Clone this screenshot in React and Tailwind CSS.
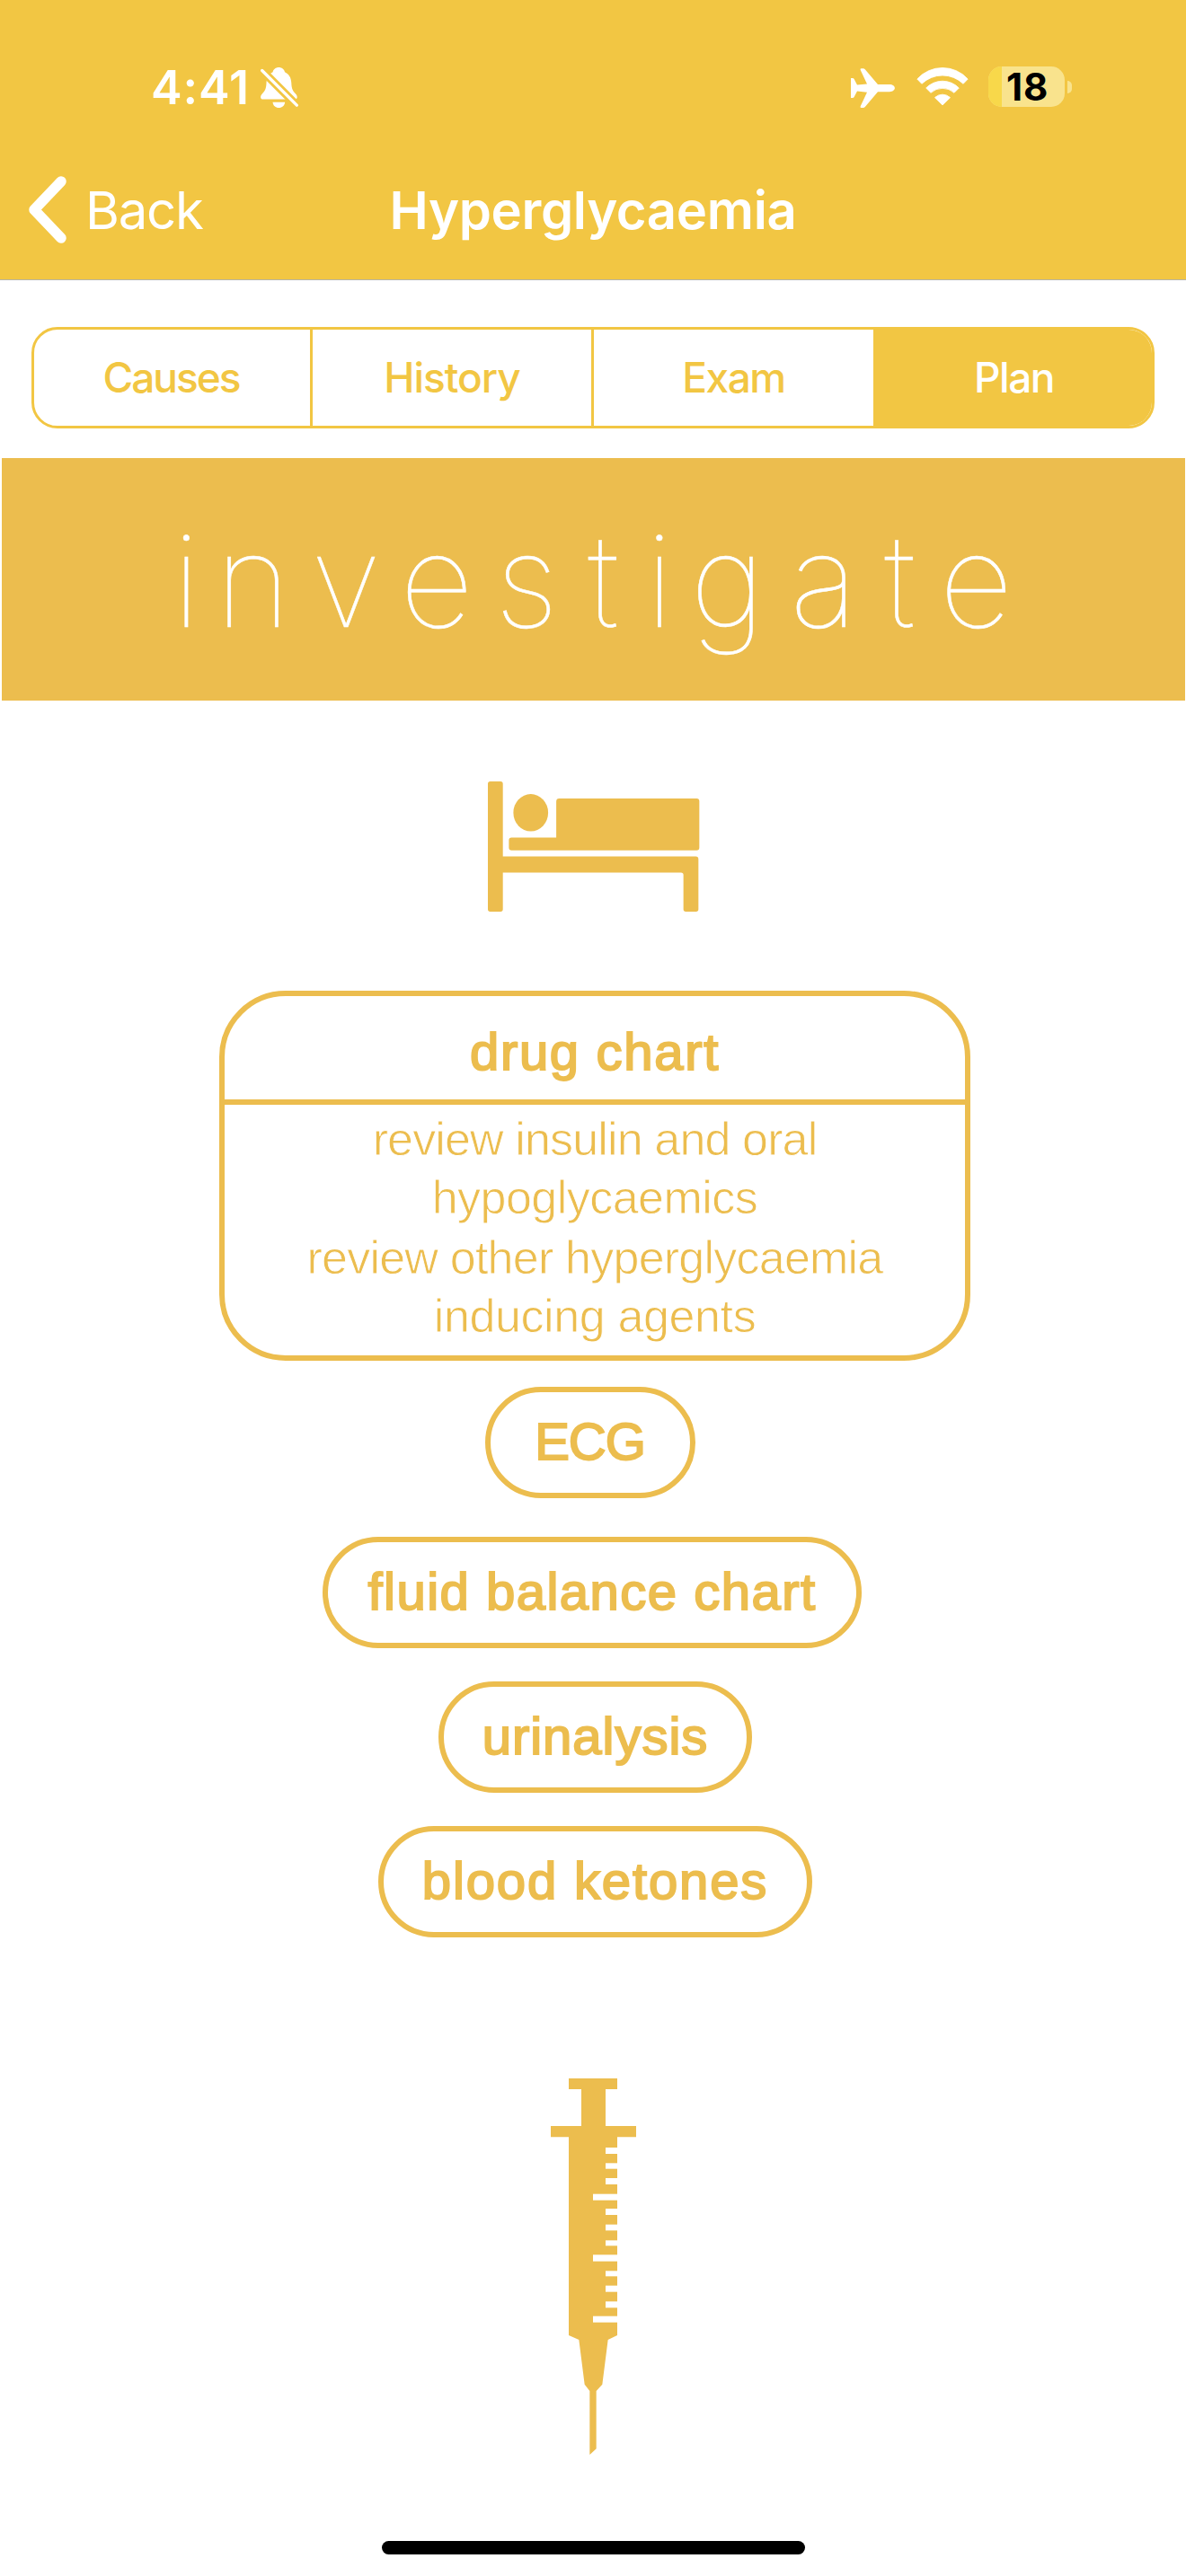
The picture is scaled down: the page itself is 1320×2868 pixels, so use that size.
function BellSlashIcon() {
  return (
    <svg width="42" height="46" viewBox="0 0 42 46" className="block">
      <path d="M20.3 0c-3.4 0-6 2.200-6.700 5.200C9 7.400 6.700 11.500 6.500 17.500C6.300 23.500 5 26 2 29.300C.6 30.900.1 32 .1 33.300C.1 34.700 1.200 35.600 2.800 35.600H38c1.600 0 2.700-.9 2.700-2.300c0-1.300-.5-2.400-1.900-4C35.800 26 34.500 23.500 34.300 17.500C34.100 11.500 31.600 7.400 27 5.200C26.300 2.200 23.700 0 20.300 0Z" fill="#fff" />
      <path d="M13.500 38.700H27.200C26.800 42.500 24 45 20.300 45S13.900 42.500 13.500 38.700Z" fill="#fff" />
      <path d="M1.700 3.500L40.600 42.500" stroke="#f2c643" strokeWidth="9" />
      <path d="M1.700 3.500L40.300 42.200" stroke="#fff" strokeWidth="3.300" strokeLinecap="round" />
    </svg>
  );
}

function PlaneIcon() {
  return (
    <svg width="49" height="44" viewBox="0 0 49 44" className="block">
      <path d="M30 18H43C46.500 18 48.900 20 48.900 22S46.500 26.200 43 26.200H30L16 42.700Q15 44 13.500 44H11.500Q10 44 10.700 42.300L18 26.800L7 25.600L3.600 32Q3.100 33 2 33H0V11H2Q3.100 11 3.600 12L7 18.600L18 17.500L10.700 2Q10 .3 11.500.3H13.500Q15 .3 16 1.600Z" fill="#fff" />
    </svg>
  );
}

function WifiIcon() {
  return (
    <svg width="58" height="43" viewBox="0 0 57.200 43" className="block">
      <g fill="#fff" stroke="#fff" strokeWidth=".8" strokeLinejoin="round">
        <path d="M.4 13A38 38 0 0 1 56.800 13L51.700 18.300A33.300 33.300 0 0 0 5.500 18.300Z" />
        <path d="M10.300 23A25.500 25.500 0 0 1 46.900 23L41.600 28.300A19.400 19.400 0 0 0 15.600 28.300Z" />
        <path d="M20.100 33.700A12 12 0 0 1 37.100 33.700L28.600 42Z" />
      </g>
    </svg>
  );
}

function Battery() {
  return (
    <div className="flex items-center gap-[3px]">
      <div className="flex h-[45px] w-[85px] items-center rounded-[15px] bg-[#f9e38d]">
        <div className="h-full w-[15px] rounded-l-[15px] bg-[#f8d84a]" />
        <span className="pl-[5px] text-[42px] leading-[52px] font-bold tracking-[0.9px] text-black">18</span>
      </div>
      <div className="h-[14px] w-[5px] rounded-r-full bg-[#f9e38d]" />
    </div>
  );
}

function BedIcon() {
  return (
    <svg width="236" height="145" viewBox="129 60 707 434" className="mt-[90px] ml-[2px] block shrink-0">
      <g fill="#ecbd4e">
        <path d="M137 60H171Q179 60 179 68V310H822Q831 310 831 319V486Q831 494 823 494H789Q781 494 781 486V372Q781 364 773 364H179V486Q179 494 171 494H137Q129 494 129 486V68Q129 60 137 60Z" />
        <path d="M367 117H825Q834 117 834 126V281Q834 290 825 290H208Q199 290 199 281V256Q199 247 208 247H357V127Q357 117 367 117Z" />
        <ellipse cx="272" cy="164" rx="58" ry="62" />
      </g>
    </svg>
  );
}

const marks = [
  [342, 303, 21], [342, 355, 19], [342, 405, 21], [300, 458, 21],
  [342, 507, 21], [342, 560, 20], [342, 613, 18], [300, 661, 22],
  [342, 715, 18], [342, 764, 21], [342, 817, 21], [300, 866, 21],
];

function SyringeIcon() {
  return (
    <svg width="95" height="419" viewBox="159 72 285 1257" className="mt-[157px] ml-[1px] block shrink-0">
      <path d="M219 72H381V108H342V231H444V268H381V930L350 945L331 1094L311 1116V1309L289 1329V1116L272 1094L253 945L219 930V268H159V231H261V108H219Z" fill="#ecbd4e" />
      {marks.map(([x, y, h]) => (
        <rect key={y} x={x} y={y} width={383 - x} height={h} fill="#fff" />
      ))}
    </svg>
  );
}

// Space after each letter of the banner title, in pixels.
const kerning = [
  ["i", 16.9], ["n", 22.9], ["v", 23.9], ["e", 23.9], ["s", 32.9], ["t", 29.9],
  ["i", 18.9], ["g", 27.9], ["a", 29.9], ["t", 26.9], ["e", 0],
];

function Pill({ className, children }) {
  return (
    <div className={"flex h-[124px] shrink-0 items-center justify-center rounded-full border-[6px] border-[#ecbd4e] pb-[2px] text-[58px] leading-none [-webkit-text-stroke:2px_#ecbd4e] " + className}>
      {children}
    </div>
  );
}

export default function App() {
  return (
    <div className="flex h-[2868px] w-[1320px] flex-col bg-white font-['Inter',sans-serif]">
      <header className="h-[312px] shrink-0 border-b border-[#b5b5a8] bg-[#f2c643] text-white">
        <div className="flex h-[156px] items-center justify-between pt-[40px] pr-[127px] pl-[168px]">
          <div className="flex items-center gap-[12px]">
            <span className="text-[52px] leading-none font-semibold tracking-[0.900px]">4:41</span>
            <BellSlashIcon />
          </div>
          <div className="flex items-center">
            <PlaneIcon />
            <div className="-mt-[3px] ml-[24px]"><WifiIcon /></div>
            <div className="-mt-[3px] ml-[22px]"><Battery /></div>
          </div>
        </div>
        <nav className="grid h-[155px] grid-cols-[1fr_auto_1fr] items-center pl-[31px] pr-[31px]">
          <div className="flex items-center gap-[21px]">
            <svg width="43" height="75" viewBox="0 0 43 75" className="block">
              <path d="M37 6L7 37.500L37 69" fill="none" stroke="#fff" strokeWidth="11.500" strokeLinecap="round" strokeLinejoin="round" />
            </svg>
            <span className="text-[58px] leading-none tracking-[-1.200px]">Back</span>
          </div>
          <h1 className="text-[58px] leading-[70px] font-semibold tracking-[-0.340px]">Hyperglycaemia</h1>
        </nav>
      </header>

      <div className="mx-[35px] mt-[52px] flex h-[113px] shrink-0 overflow-hidden rounded-[29px] border-[3px] border-[#f2c643] text-[46px] font-medium text-[#f2c643]">
        <div className="flex w-[310px] items-center justify-center border-r-[3px] border-[#f2c643] pr-[2px] tracking-[-2px]">Causes</div>
        <div className="flex w-[313px] items-center justify-center border-r-[3px] border-[#f2c643] tracking-[-1.020px]">History</div>
        <div className="flex w-[311px] items-center justify-center tracking-[-1.500px]">Exam</div>
        <div className="flex flex-1 items-center justify-center bg-[#f2c643] pl-[3px] tracking-[-1.500px] text-white">Plan</div>
      </div>

      <div className="mt-[33px] mr-[1px] ml-[2px] flex h-[270px] shrink-0 items-center bg-[#ecbd4e] pl-[190px]">
        <h2 className="text-[143px] leading-none font-thin text-white [-webkit-text-stroke:0.500px_#fff]">
          {kerning.map(([letter, space], i) => (
            <span key={i} style={{ letterSpacing: space }}>{letter}</span>
          ))}
        </h2>
      </div>

      <main className="flex flex-col items-center font-['Liberation_Sans',sans-serif] text-[#ecbd4e]">
        <BedIcon />
        <section className="mt-[88px] ml-[4px] flex h-[412px] w-[836px] shrink-0 flex-col rounded-[74px] border-[6px] border-[#ecbd4e] text-center">
          <h3 className="flex h-[121px] items-center justify-center border-b-[6px] border-[#ecbd4e] pt-[8px] text-[58px] leading-none tracking-[1.700px] [-webkit-text-stroke:2px_#ecbd4e]">drug chart</h3>
          <div className="pt-[6px] text-[52px] leading-[65.400px] [-webkit-text-stroke:0.800px_#fff]">
            <p className="tracking-[-0.860px]">review insulin and oral</p>
            <p className="tracking-[-0.530px]">hypoglycaemics</p>
            <p className="pt-[1px] tracking-[-0.770px]">review other hyperglycaemia</p>
            <p className="tracking-[-0.380px]">inducing agents</p>
          </div>
        </section>
        <Pill className="mt-[29px] mr-[7px] w-[234px] tracking-[-1px]">ECG</Pill>
        <Pill className="mt-[43px] mr-[2px] w-[600px] tracking-[1.500px]">fluid balance chart</Pill>
        <Pill className="mt-[37px] ml-[5px] w-[349px] tracking-[1px]">urinalysis</Pill>
        <Pill className="mt-[37px] ml-[5px] w-[483px] tracking-[1.860px]">blood ketones</Pill>
        <SyringeIcon />
      </main>

      <div className="mx-auto mt-[96px] h-[15px] w-[471px] shrink-0 rounded-full bg-black" />
    </div>
  );
}
